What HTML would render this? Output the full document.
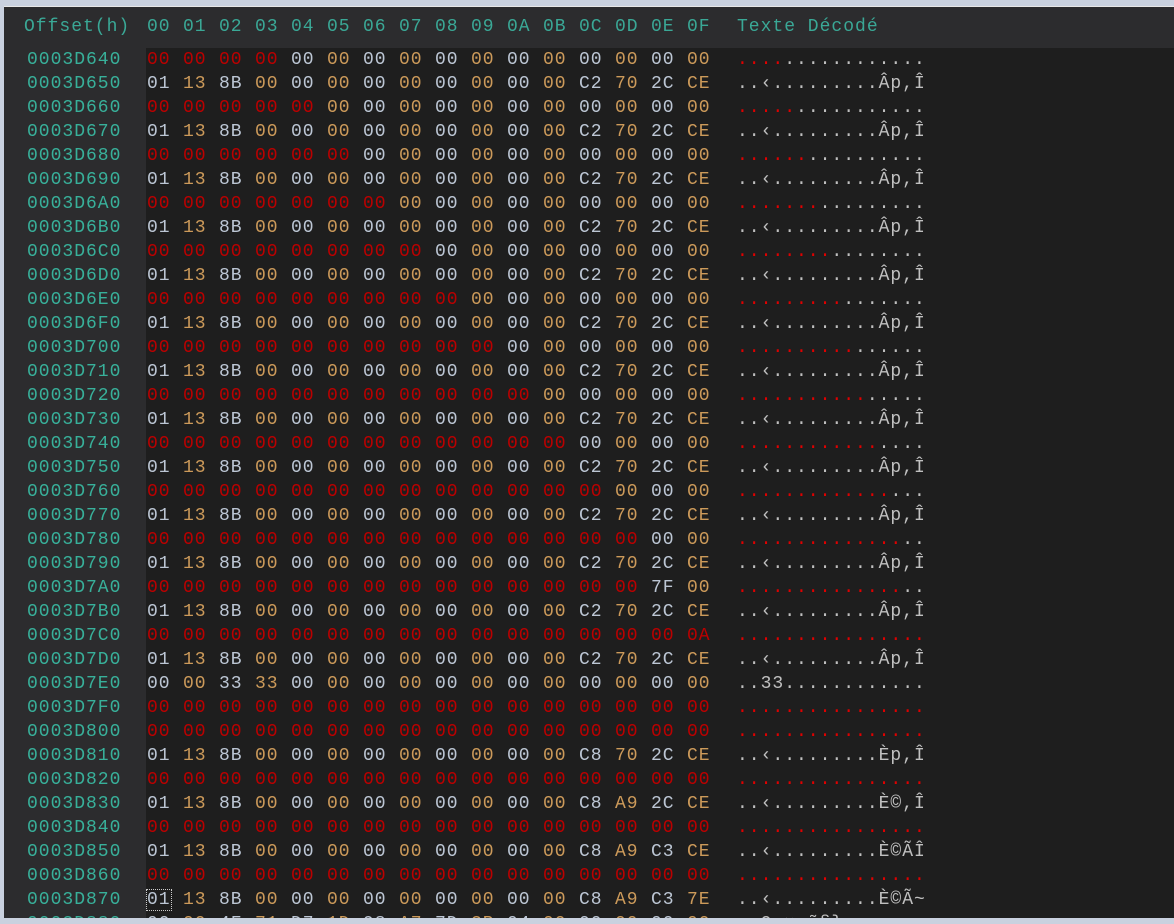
<!DOCTYPE html>
<html><head><meta charset="utf-8"><style>
body{margin:0;width:1174px;height:924px;overflow:hidden;background:#c9d1df;font-family:"Liberation Mono",monospace;font-size:18px;}
#p{position:absolute;left:4px;top:6px;width:1170px;height:912px;background:#2c2c2e;overflow:hidden;border-top:1px solid #e8e8e8;}
#d{position:absolute;left:142px;top:41px;right:0;bottom:0;background:#1e1e1e;}
.r{position:absolute;left:0;height:24px;line-height:24px;white-space:pre;}
.o{position:absolute;left:23px;color:#38b09a;letter-spacing:1px;}
.hx{position:absolute;left:143px;}
.hx i{font-style:normal;display:inline-block;width:36px;letter-spacing:1px;color:#bcc6d4;}
.hx i:nth-child(even){color:#cc9a5a;}
.hx i.x{color:#bb0000;}
.t{position:absolute;left:733px;color:#c0c0c0;letter-spacing:1px;}
.t b{font-weight:normal;color:#e00000;}
.hd{color:#3aa896;}
.hd .hx i{color:#3aa896;}
.cur{outline:1px dotted #ccc;outline-offset:0}
#bl{position:absolute;left:0;top:918px;width:1174px;height:6px;background:#c9d1df}
</style></head><body>
<div id="p">
<div id="d"></div>
<div class="r hd" style="top:8px"><span class="o" style="left:20px;color:#3aa896">Offset(h)</span><span class="hx"><i>00</i><i>01</i><i>02</i><i>03</i><i>04</i><i>05</i><i>06</i><i>07</i><i>08</i><i>09</i><i>0A</i><i>0B</i><i>0C</i><i>0D</i><i>0E</i><i>0F</i></span><span class="t" style="color:#3aa896">Texte Décodé</span></div>

<div class="r" style="top:41px"><span class="o">0003D640</span><span class="hx"><i class="x">00</i><i class="x">00</i><i class="x">00</i><i class="x">00</i><i>00</i><i>00</i><i>00</i><i>00</i><i>00</i><i>00</i><i>00</i><i>00</i><i>00</i><i>00</i><i>00</i><i>00</i></span><span class="t"><b>....</b>............</span></div>
<div class="r" style="top:65px"><span class="o">0003D650</span><span class="hx"><i>01</i><i>13</i><i>8B</i><i>00</i><i>00</i><i>00</i><i>00</i><i>00</i><i>00</i><i>00</i><i>00</i><i>00</i><i>C2</i><i>70</i><i>2C</i><i>CE</i></span><span class="t">..‹.........Âp,Î</span></div>
<div class="r" style="top:89px"><span class="o">0003D660</span><span class="hx"><i class="x">00</i><i class="x">00</i><i class="x">00</i><i class="x">00</i><i class="x">00</i><i>00</i><i>00</i><i>00</i><i>00</i><i>00</i><i>00</i><i>00</i><i>00</i><i>00</i><i>00</i><i>00</i></span><span class="t"><b>.....</b>...........</span></div>
<div class="r" style="top:113px"><span class="o">0003D670</span><span class="hx"><i>01</i><i>13</i><i>8B</i><i>00</i><i>00</i><i>00</i><i>00</i><i>00</i><i>00</i><i>00</i><i>00</i><i>00</i><i>C2</i><i>70</i><i>2C</i><i>CE</i></span><span class="t">..‹.........Âp,Î</span></div>
<div class="r" style="top:137px"><span class="o">0003D680</span><span class="hx"><i class="x">00</i><i class="x">00</i><i class="x">00</i><i class="x">00</i><i class="x">00</i><i class="x">00</i><i>00</i><i>00</i><i>00</i><i>00</i><i>00</i><i>00</i><i>00</i><i>00</i><i>00</i><i>00</i></span><span class="t"><b>......</b>..........</span></div>
<div class="r" style="top:161px"><span class="o">0003D690</span><span class="hx"><i>01</i><i>13</i><i>8B</i><i>00</i><i>00</i><i>00</i><i>00</i><i>00</i><i>00</i><i>00</i><i>00</i><i>00</i><i>C2</i><i>70</i><i>2C</i><i>CE</i></span><span class="t">..‹.........Âp,Î</span></div>
<div class="r" style="top:185px"><span class="o">0003D6A0</span><span class="hx"><i class="x">00</i><i class="x">00</i><i class="x">00</i><i class="x">00</i><i class="x">00</i><i class="x">00</i><i class="x">00</i><i>00</i><i>00</i><i>00</i><i>00</i><i>00</i><i>00</i><i>00</i><i>00</i><i>00</i></span><span class="t"><b>.......</b>.........</span></div>
<div class="r" style="top:209px"><span class="o">0003D6B0</span><span class="hx"><i>01</i><i>13</i><i>8B</i><i>00</i><i>00</i><i>00</i><i>00</i><i>00</i><i>00</i><i>00</i><i>00</i><i>00</i><i>C2</i><i>70</i><i>2C</i><i>CE</i></span><span class="t">..‹.........Âp,Î</span></div>
<div class="r" style="top:233px"><span class="o">0003D6C0</span><span class="hx"><i class="x">00</i><i class="x">00</i><i class="x">00</i><i class="x">00</i><i class="x">00</i><i class="x">00</i><i class="x">00</i><i class="x">00</i><i>00</i><i>00</i><i>00</i><i>00</i><i>00</i><i>00</i><i>00</i><i>00</i></span><span class="t"><b>........</b>........</span></div>
<div class="r" style="top:257px"><span class="o">0003D6D0</span><span class="hx"><i>01</i><i>13</i><i>8B</i><i>00</i><i>00</i><i>00</i><i>00</i><i>00</i><i>00</i><i>00</i><i>00</i><i>00</i><i>C2</i><i>70</i><i>2C</i><i>CE</i></span><span class="t">..‹.........Âp,Î</span></div>
<div class="r" style="top:281px"><span class="o">0003D6E0</span><span class="hx"><i class="x">00</i><i class="x">00</i><i class="x">00</i><i class="x">00</i><i class="x">00</i><i class="x">00</i><i class="x">00</i><i class="x">00</i><i class="x">00</i><i>00</i><i>00</i><i>00</i><i>00</i><i>00</i><i>00</i><i>00</i></span><span class="t"><b>.........</b>.......</span></div>
<div class="r" style="top:305px"><span class="o">0003D6F0</span><span class="hx"><i>01</i><i>13</i><i>8B</i><i>00</i><i>00</i><i>00</i><i>00</i><i>00</i><i>00</i><i>00</i><i>00</i><i>00</i><i>C2</i><i>70</i><i>2C</i><i>CE</i></span><span class="t">..‹.........Âp,Î</span></div>
<div class="r" style="top:329px"><span class="o">0003D700</span><span class="hx"><i class="x">00</i><i class="x">00</i><i class="x">00</i><i class="x">00</i><i class="x">00</i><i class="x">00</i><i class="x">00</i><i class="x">00</i><i class="x">00</i><i class="x">00</i><i>00</i><i>00</i><i>00</i><i>00</i><i>00</i><i>00</i></span><span class="t"><b>..........</b>......</span></div>
<div class="r" style="top:353px"><span class="o">0003D710</span><span class="hx"><i>01</i><i>13</i><i>8B</i><i>00</i><i>00</i><i>00</i><i>00</i><i>00</i><i>00</i><i>00</i><i>00</i><i>00</i><i>C2</i><i>70</i><i>2C</i><i>CE</i></span><span class="t">..‹.........Âp,Î</span></div>
<div class="r" style="top:377px"><span class="o">0003D720</span><span class="hx"><i class="x">00</i><i class="x">00</i><i class="x">00</i><i class="x">00</i><i class="x">00</i><i class="x">00</i><i class="x">00</i><i class="x">00</i><i class="x">00</i><i class="x">00</i><i class="x">00</i><i>00</i><i>00</i><i>00</i><i>00</i><i>00</i></span><span class="t"><b>...........</b>.....</span></div>
<div class="r" style="top:401px"><span class="o">0003D730</span><span class="hx"><i>01</i><i>13</i><i>8B</i><i>00</i><i>00</i><i>00</i><i>00</i><i>00</i><i>00</i><i>00</i><i>00</i><i>00</i><i>C2</i><i>70</i><i>2C</i><i>CE</i></span><span class="t">..‹.........Âp,Î</span></div>
<div class="r" style="top:425px"><span class="o">0003D740</span><span class="hx"><i class="x">00</i><i class="x">00</i><i class="x">00</i><i class="x">00</i><i class="x">00</i><i class="x">00</i><i class="x">00</i><i class="x">00</i><i class="x">00</i><i class="x">00</i><i class="x">00</i><i class="x">00</i><i>00</i><i>00</i><i>00</i><i>00</i></span><span class="t"><b>............</b>....</span></div>
<div class="r" style="top:449px"><span class="o">0003D750</span><span class="hx"><i>01</i><i>13</i><i>8B</i><i>00</i><i>00</i><i>00</i><i>00</i><i>00</i><i>00</i><i>00</i><i>00</i><i>00</i><i>C2</i><i>70</i><i>2C</i><i>CE</i></span><span class="t">..‹.........Âp,Î</span></div>
<div class="r" style="top:473px"><span class="o">0003D760</span><span class="hx"><i class="x">00</i><i class="x">00</i><i class="x">00</i><i class="x">00</i><i class="x">00</i><i class="x">00</i><i class="x">00</i><i class="x">00</i><i class="x">00</i><i class="x">00</i><i class="x">00</i><i class="x">00</i><i class="x">00</i><i>00</i><i>00</i><i>00</i></span><span class="t"><b>.............</b>...</span></div>
<div class="r" style="top:497px"><span class="o">0003D770</span><span class="hx"><i>01</i><i>13</i><i>8B</i><i>00</i><i>00</i><i>00</i><i>00</i><i>00</i><i>00</i><i>00</i><i>00</i><i>00</i><i>C2</i><i>70</i><i>2C</i><i>CE</i></span><span class="t">..‹.........Âp,Î</span></div>
<div class="r" style="top:521px"><span class="o">0003D780</span><span class="hx"><i class="x">00</i><i class="x">00</i><i class="x">00</i><i class="x">00</i><i class="x">00</i><i class="x">00</i><i class="x">00</i><i class="x">00</i><i class="x">00</i><i class="x">00</i><i class="x">00</i><i class="x">00</i><i class="x">00</i><i class="x">00</i><i>00</i><i>00</i></span><span class="t"><b>..............</b>..</span></div>
<div class="r" style="top:545px"><span class="o">0003D790</span><span class="hx"><i>01</i><i>13</i><i>8B</i><i>00</i><i>00</i><i>00</i><i>00</i><i>00</i><i>00</i><i>00</i><i>00</i><i>00</i><i>C2</i><i>70</i><i>2C</i><i>CE</i></span><span class="t">..‹.........Âp,Î</span></div>
<div class="r" style="top:569px"><span class="o">0003D7A0</span><span class="hx"><i class="x">00</i><i class="x">00</i><i class="x">00</i><i class="x">00</i><i class="x">00</i><i class="x">00</i><i class="x">00</i><i class="x">00</i><i class="x">00</i><i class="x">00</i><i class="x">00</i><i class="x">00</i><i class="x">00</i><i class="x">00</i><i>7F</i><i>00</i></span><span class="t"><b>..............</b>..</span></div>
<div class="r" style="top:593px"><span class="o">0003D7B0</span><span class="hx"><i>01</i><i>13</i><i>8B</i><i>00</i><i>00</i><i>00</i><i>00</i><i>00</i><i>00</i><i>00</i><i>00</i><i>00</i><i>C2</i><i>70</i><i>2C</i><i>CE</i></span><span class="t">..‹.........Âp,Î</span></div>
<div class="r" style="top:617px"><span class="o">0003D7C0</span><span class="hx"><i class="x">00</i><i class="x">00</i><i class="x">00</i><i class="x">00</i><i class="x">00</i><i class="x">00</i><i class="x">00</i><i class="x">00</i><i class="x">00</i><i class="x">00</i><i class="x">00</i><i class="x">00</i><i class="x">00</i><i class="x">00</i><i class="x">00</i><i class="x">0A</i></span><span class="t"><b>................</b></span></div>
<div class="r" style="top:641px"><span class="o">0003D7D0</span><span class="hx"><i>01</i><i>13</i><i>8B</i><i>00</i><i>00</i><i>00</i><i>00</i><i>00</i><i>00</i><i>00</i><i>00</i><i>00</i><i>C2</i><i>70</i><i>2C</i><i>CE</i></span><span class="t">..‹.........Âp,Î</span></div>
<div class="r" style="top:665px"><span class="o">0003D7E0</span><span class="hx"><i>00</i><i>00</i><i>33</i><i>33</i><i>00</i><i>00</i><i>00</i><i>00</i><i>00</i><i>00</i><i>00</i><i>00</i><i>00</i><i>00</i><i>00</i><i>00</i></span><span class="t">..33............</span></div>
<div class="r" style="top:689px"><span class="o">0003D7F0</span><span class="hx"><i class="x">00</i><i class="x">00</i><i class="x">00</i><i class="x">00</i><i class="x">00</i><i class="x">00</i><i class="x">00</i><i class="x">00</i><i class="x">00</i><i class="x">00</i><i class="x">00</i><i class="x">00</i><i class="x">00</i><i class="x">00</i><i class="x">00</i><i class="x">00</i></span><span class="t"><b>................</b></span></div>
<div class="r" style="top:713px"><span class="o">0003D800</span><span class="hx"><i class="x">00</i><i class="x">00</i><i class="x">00</i><i class="x">00</i><i class="x">00</i><i class="x">00</i><i class="x">00</i><i class="x">00</i><i class="x">00</i><i class="x">00</i><i class="x">00</i><i class="x">00</i><i class="x">00</i><i class="x">00</i><i class="x">00</i><i class="x">00</i></span><span class="t"><b>................</b></span></div>
<div class="r" style="top:737px"><span class="o">0003D810</span><span class="hx"><i>01</i><i>13</i><i>8B</i><i>00</i><i>00</i><i>00</i><i>00</i><i>00</i><i>00</i><i>00</i><i>00</i><i>00</i><i>C8</i><i>70</i><i>2C</i><i>CE</i></span><span class="t">..‹.........Èp,Î</span></div>
<div class="r" style="top:761px"><span class="o">0003D820</span><span class="hx"><i class="x">00</i><i class="x">00</i><i class="x">00</i><i class="x">00</i><i class="x">00</i><i class="x">00</i><i class="x">00</i><i class="x">00</i><i class="x">00</i><i class="x">00</i><i class="x">00</i><i class="x">00</i><i class="x">00</i><i class="x">00</i><i class="x">00</i><i class="x">00</i></span><span class="t"><b>................</b></span></div>
<div class="r" style="top:785px"><span class="o">0003D830</span><span class="hx"><i>01</i><i>13</i><i>8B</i><i>00</i><i>00</i><i>00</i><i>00</i><i>00</i><i>00</i><i>00</i><i>00</i><i>00</i><i>C8</i><i>A9</i><i>2C</i><i>CE</i></span><span class="t">..‹.........È©,Î</span></div>
<div class="r" style="top:809px"><span class="o">0003D840</span><span class="hx"><i class="x">00</i><i class="x">00</i><i class="x">00</i><i class="x">00</i><i class="x">00</i><i class="x">00</i><i class="x">00</i><i class="x">00</i><i class="x">00</i><i class="x">00</i><i class="x">00</i><i class="x">00</i><i class="x">00</i><i class="x">00</i><i class="x">00</i><i class="x">00</i></span><span class="t"><b>................</b></span></div>
<div class="r" style="top:833px"><span class="o">0003D850</span><span class="hx"><i>01</i><i>13</i><i>8B</i><i>00</i><i>00</i><i>00</i><i>00</i><i>00</i><i>00</i><i>00</i><i>00</i><i>00</i><i>C8</i><i>A9</i><i>C3</i><i>CE</i></span><span class="t">..‹.........È©ÃÎ</span></div>
<div class="r" style="top:857px"><span class="o">0003D860</span><span class="hx"><i class="x">00</i><i class="x">00</i><i class="x">00</i><i class="x">00</i><i class="x">00</i><i class="x">00</i><i class="x">00</i><i class="x">00</i><i class="x">00</i><i class="x">00</i><i class="x">00</i><i class="x">00</i><i class="x">00</i><i class="x">00</i><i class="x">00</i><i class="x">00</i></span><span class="t"><b>................</b></span></div>
<div class="r" style="top:881px"><span class="o">0003D870</span><span class="hx"><i><span class="cur">01</span></i><i>13</i><i>8B</i><i>00</i><i>00</i><i>00</i><i>00</i><i>00</i><i>00</i><i>00</i><i>00</i><i>00</i><i>C8</i><i>A9</i><i>C3</i><i>7E</i></span><span class="t">..‹.........È©Ã~</span></div>
<div class="r" style="top:905px"><span class="o">0003D880</span><span class="hx"><i>00</i><i>00</i><i>4F</i><i>71</i><i>D7</i><i>1D</i><i>98</i><i>A7</i><i>7D</i><i>3B</i><i>04</i><i>00</i><i>00</i><i>00</i><i>00</i><i>00</i></span><span class="t">..Oq×.˜§};......</span></div>
</div>
<div id="bl"></div>
</body></html>
